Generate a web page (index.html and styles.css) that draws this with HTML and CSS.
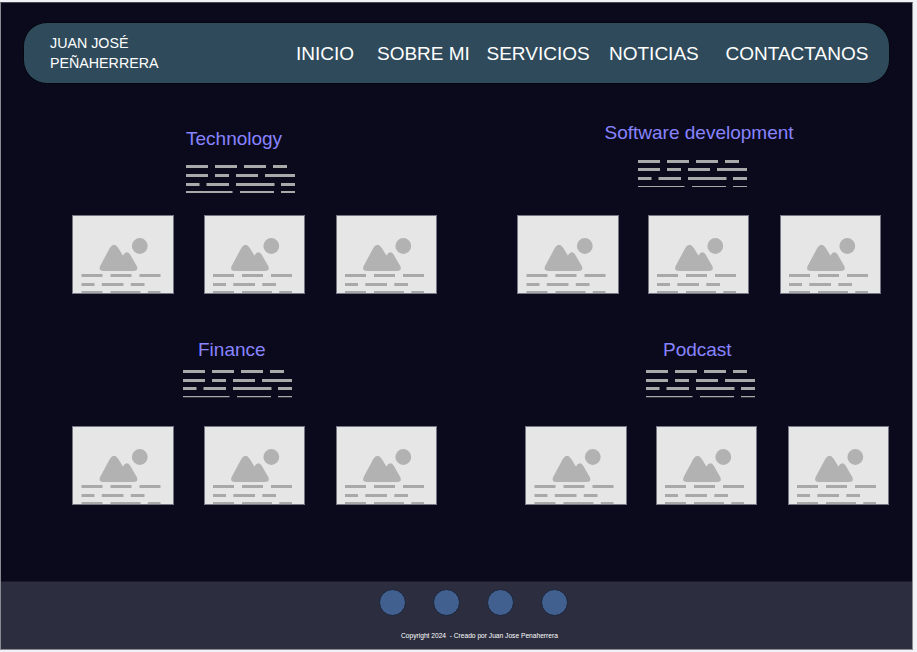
FILE: index.html
```html
<!DOCTYPE html>
<html lang="es">
<head>
<meta charset="utf-8">
<title>Juan José Peñaherrera</title>
<link rel="stylesheet" href="styles.css">
</head>
<body>
<svg class="sprites" aria-hidden="true">
  <symbol id="card" viewBox="0 0 101 79">
    <path d="M27.4 51.5 L37.3 33 Q41.5 26.5 45.8 33 L50.4 40.6 Q54 34.5 57.6 39.5 L64.5 51.5 Q66 56 61 56 H31 Q26 56 27.4 51.5Z" fill="#b2b2b2"/>
    <circle cx="67.3" cy="31" r="7.9" fill="#b2b2b2"/>
    <path d="M9 60.5h21M38 60.5h21M67 60.5h21M9 69.5h13M29.3 69.5h21.7M58.3 69.5h13.7M9 77.5h21M38 77.5h30M75.3 77.5h12.7" stroke="#a9a9a9" stroke-width="3" fill="none"/>
  </symbol>
</svg>
<div class="frame">
  <header class="header">
    <div class="brand">JUAN JOSÉ<br>PEÑAHERRERA</div>
    <nav class="nav">
      <a class="inicio">INICIO</a><a class="sobre">SOBRE MI</a><a class="servicios">SERVICIOS</a><a class="noticias">NOTICIAS</a><a class="contacto">CONTACTANOS</a>
    </nav>
  </header>
  <main class="main">
    <section class="topic technology">
      <h2>Technology</h2>
      <svg class="lines" width="110" height="29"><path d="M0 1.5h22M29 1.5h22M58 1.5h22M87 1.5h14M0 10.5h22M29 10.5h14M50 10.5h22M79 10.5h30M0 19.5h13.5M20.5 19.5h22.5M50 19.5h38.5M95 19.5h14"/><path class="thin" d="M0 27h46.5M54 27h34M95 27h14"/></svg>
      <div class="cards"><svg><use href="#card"/></svg><svg><use href="#card"/></svg><svg><use href="#card"/></svg></div>
    </section>
    <section class="topic software">
      <h2>Software development</h2>
      <svg class="lines" width="110" height="29"><path d="M0 1.5h22M29 1.5h22M58 1.5h22M87 1.5h14M0 9.5h22M29 9.5h14M50 9.5h22M79 9.5h30M0 18.5h13.5M20.5 18.5h22.5M50 18.5h38.5M95 18.5h14"/><path class="hair" d="M0 26.5h46.5M54 26.5h34M95 26.5h14"/></svg>
      <div class="cards"><svg><use href="#card"/></svg><svg><use href="#card"/></svg><svg><use href="#card"/></svg></div>
    </section>
    <section class="topic finance">
      <h2>Finance</h2>
      <svg class="lines" width="110" height="29"><path d="M0 1.5h22M29 1.5h22M58 1.5h22M87 1.5h14M0 10.5h22M29 10.5h14M50 10.5h22M79 10.5h30M0 18.5h13.5M20.5 18.5h22.5M50 18.5h38.5M95 18.5h14"/><path class="hair" d="M0 26.6h46.5M54 26.6h34M95 26.6h14"/></svg>
      <div class="cards"><svg><use href="#card"/></svg><svg><use href="#card"/></svg><svg><use href="#card"/></svg></div>
    </section>
    <section class="topic podcast">
      <h2>Podcast</h2>
      <svg class="lines" width="110" height="29"><path d="M0 1.5h22M29 1.5h22M58 1.5h22M87 1.5h14M0 10.5h22M29 10.5h14M50 10.5h22M79 10.5h30M0 18.5h13.5M20.5 18.5h22.5M50 18.5h38.5M95 18.5h14"/><path class="hair" d="M0 26.6h46.5M54 26.6h34M95 26.6h14"/></svg>
      <div class="cards"><svg><use href="#card"/></svg><svg><use href="#card"/></svg><svg><use href="#card"/></svg></div>
    </section>
  </main>
  <footer class="footer">
    <div class="social"><i></i><i></i><i></i><i></i></div>
    <p class="copyright">Copyright 2024 &nbsp;- Creado por Juan Jose Penaherrera</p>
  </footer>
</div>
</body>
</html>
```
FILE: styles.css
```css
* { box-sizing: border-box; }
body {
  margin: 0;
  padding-top: 2px;
  height: 652px;
  overflow: hidden;
  background: #f0f2f8;
  font-family: "Liberation Sans", Arial, sans-serif;
}
.sprites { display: none; }
.frame {
  width: 913px;
  height: 648px;
  border: 1px solid #8a8b90;
  border-top-color: #4a4a54;
  background: #0b0a1d;
  display: flex;
  flex-direction: column;
}
.header {
  display: flex;
  align-items: center;
  flex: none;
  width: 867px;
  height: 62px;
  margin: 19px 0 0 22px;
  border: 1px solid #03060c;
  border-radius: 24px;
  background: #2f4b5b;
  color: #fff;
}
.brand {
  width: 245px;
  padding-left: 26px;
  font-size: 14.25px;
  line-height: 20px;
}
.nav {
  display: flex;
  padding-top: 1px;
  font-size: 19px;
  line-height: 23px;
  white-space: nowrap;
}
.nav a { flex: none; }
.inicio { width: 81px; margin-left: 27px; }
.sobre { width: 109.5px; }
.servicios { width: 122.5px; }
.noticias { width: 116.5px; }
.main {
  flex: none;
  height: 497px;
  display: grid;
  grid-template-columns: 445px 466px;
  grid-template-rows: 239px 258px;
}
.topic { display: flex; flex-direction: column; align-items: flex-start; }
.topic h2 {
  margin: 0;
  height: 22px;
  font-size: 19px;
  line-height: 22px;
  font-weight: 400;
  color: #8884ff;
  white-space: nowrap;
}
.lines { display: block; fill: none; stroke: #a9a9a9; stroke-width: 3; }
.lines .thin { stroke-width: 2; }
.lines .hair { stroke-width: 1.2; }
.cards {
  display: grid;
  grid-template-columns: 132px 131px 101px;
}
.cards svg {
  display: block;
  width: 101px;
  height: 79px;
  background: #e6e6e6;
  outline: 1px solid #777783;
  outline-offset: -1px;
}
.cards svg:first-child { width: 102px; }
.technology { padding-top: 44px; }
.technology h2 { margin-left: 185px; }
.technology .lines { margin: 15px 0 21px 185px; }
.technology .cards, .finance .cards {
  margin-left: 71px;
  grid-template-columns: 132px 132px 101px;
}
.software { padding-top: 38px; }
.software h2 { margin-left: 158.5px; }
.software .lines { margin: 16px 0 26px 192px; }
.software .cards { margin-left: 71px; grid-template-columns: 131px 132px 101px; }
.finance { padding-top: 16px; }
.finance h2 { margin-left: 197px; }
.finance .lines { margin: 9px 0 27px 182px; }
.podcast { padding-top: 16px; }
.podcast h2 { margin-left: 217px; }
.podcast .lines { margin: 9px 0 27px 200px; }
.podcast .cards { margin-left: 79px; grid-template-columns: 131px 132px 101px; }
.footer {
  flex: 1;
  border-top: 1px solid #1b1c29;
  background: #2c2e40;
}
.social {
  display: flex;
  gap: 27px;
  margin: 7px 0 0 378px;
}
.social i {
  width: 27px;
  height: 27px;
  border: 1px solid #1c2336;
  border-radius: 50%;
  background: #41608f;
}
.copyright {
  margin: 15px 0 0 400px;
  font-size: 6.65px;
  line-height: 10px;
  color: #fff;
  white-space: nowrap;
}
```
